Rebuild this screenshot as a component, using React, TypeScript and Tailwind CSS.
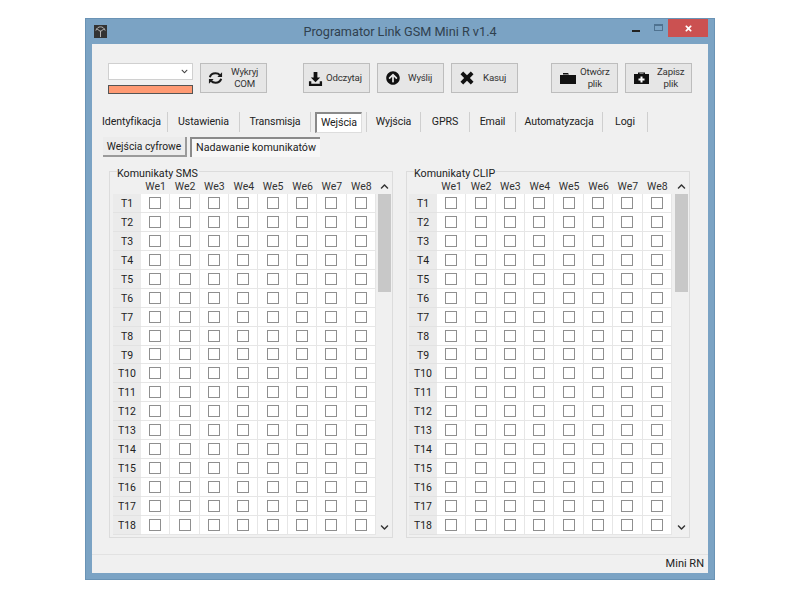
import React from "react";
import { FaArrowCircleUp, FaTimes, FaChevronDown, FaChevronUp } from "react-icons/fa";

const rows = Array.from({ length: 18 }, (_, i) => `T${i + 1}`);
const cols = ["We1", "We2", "We3", "We4", "We5", "We6", "We7", "We8"];

function Refresh() {
  return (
    <svg viewBox="0 0 16 14" className="w-[15px] h-[14px] shrink-0" fill="none">
      <path d="M2 6.2C2.6 3.6 5 2 8 2c2 0 3.6.7 4.6 2" stroke="#1a1a1a" strokeWidth="2.2" />
      <path d="M14 7.8C13.4 10.4 11 12 8 12c-2 0-3.6-.7-4.6-2" stroke="#1a1a1a" strokeWidth="2.2" />
      <path d="M15 .8V6h-5zM1 13.2V8h5z" fill="#1a1a1a" />
    </svg>
  );
}

function Download() {
  return (
    <svg viewBox="0 0 16 16" className="w-[15px] h-[15px] shrink-0" fill="#111">
      <path d="M6 1h4v6h3L8 12 3 7h3z" />
      <path d="M1 11h2.5v2.5h9V11H15v5H1z" />
    </svg>
  );
}

function BigX() {
  return (
    <svg viewBox="0 0 14 14" className="w-[14px] h-[14px] shrink-0" fill="#111">
      <path d="M3.2.6 7 4.2 10.8.6l2.7 2.7L9.9 7l3.6 3.7-2.7 2.7L7 9.8l-3.8 3.6L.5 10.7 4.1 7 .5 3.3z" />
    </svg>
  );
}

function Folder() {
  return (
    <svg viewBox="0 0 16 11" className="w-[16px] h-[11px] shrink-0" fill="#111">
      <path d="M3 0h5l1 1.5H3z" />
      <rect x="0" y="2" width="16" height="9" />
    </svg>
  );
}

function Case() {
  return (
    <svg viewBox="0 0 15 12" className="w-[15px] h-[12px] shrink-0">
      <path d="M4 2V.5h7V2h4v10H0V2zM5.5 2h4V1.5h-4z" fill="#111" />
      <path d="M6.5 4.5h2v2h2v2h-2v2h-2v-2h-2v-2h2z" fill="#fff" />
    </svg>
  );
}

function ToolButton({ icon, text, className }: { icon: React.ReactNode; text: React.ReactNode; className: string }) {
  return (
    <div className={`h-[30px] w-[67px] shrink-0 flex items-center bg-[#e6e6e6] border border-[#bdbdbd] ${className}`}>
      {icon}
      <span className="text-[9.7px] leading-[12px] text-center text-[#333] tracking-[-0.2px] whitespace-nowrap">{text}</span>
    </div>
  );
}

function Tab({ label, active, w }: { label: string; active?: boolean; w: string }) {
  return (
    <div className={`${w} h-[20px] shrink-0 flex items-center justify-center border-r border-[#cfcfcf] text-[10.6px] tracking-[-0.1px] text-[#222] whitespace-nowrap`}>
      <span className={active ? "border-l-2 border-t-2 border-[#8a8a8a] border-r border-r-[#ddd] border-b border-b-[#ddd] bg-white w-[47px] h-[21px] flex items-center justify-center" : ""}>{label}</span>
    </div>
  );
}

function Group({ title, padding, scrollWidth }: { title: string; padding: string; scrollWidth: string }) {
  return (
    <div className={`w-[284px] h-[367px] shrink-0 border border-[#dcdcdc] relative ${padding}`}>
      <span className="absolute left-[7px] -top-[5px] bg-[#f0f0f0] pr-[1px] text-[10.7px] leading-[14px] text-[#222] whitespace-nowrap">{title}</span>
      <div className="flex pt-[7px]">
        <div className="w-[263px] bg-[#f0f0f0]">
          <div className="flex h-[15px] items-center">
            <div className="w-[28px]" />
            {cols.map((c) => (
              <div key={c} className="w-[29.4px] text-center text-[10.5px] leading-[15px] text-[#333]">{c}</div>
            ))}
          </div>
          {rows.map((r) => (
            <div key={r} className="flex h-[18.95px]">
              <div className="w-[28px] bg-[#ebebeb] border-b border-[#e2e2e2] text-center text-[10.5px] leading-[19px] text-[#222]">{r}</div>
              {cols.map((c) => (
                <div key={c} className="w-[29.4px] bg-white border-r border-b border-[#e6e6e6] flex items-center justify-center">
                  <span className="w-[12px] h-[12px] border border-[#8f8f8f] bg-white" />
                </div>
              ))}
            </div>
          ))}
        </div>
        <div className={`${scrollWidth} h-[356px] flex flex-col items-end`}>
          <div className="h-[15px] w-[13px] flex items-center justify-center"><FaChevronUp className="w-[9px] h-[9px] text-[#333]" /></div>
          <div className="w-[13px] h-[98px] bg-[#c8c8c8]" />
          <div className="flex-1" />
          <div className="h-[15px] w-[13px] flex items-center justify-center"><FaChevronDown className="w-[9px] h-[9px] text-[#333]" /></div>
        </div>
      </div>
    </div>
  );
}

export default function App() {
  return (
    <div className="w-[800px] h-[600px] bg-white pt-[18px] pl-[85px] font-[family-name:Roboto,sans-serif]">
      <div className="w-[630px] h-[562px] bg-[#7ba3c4] border border-[#6a93b5] flex flex-col">
        <div className="h-[25px] shrink-0 flex items-center relative pl-[8px]">
          <svg viewBox="0 0 14 14" className="w-[13px] h-[13px] shrink-0">
            <rect width="14" height="14" fill="#333" />
            <path d="M7 13V6M7 7 3 4M7 7l4-3M2 6c1-3 3-4 5-4s4 1 5 4" stroke="#bbb" strokeWidth="1" fill="none" />
          </svg>
          <div className="flex-1 text-center text-[12.7px] text-[#30414f] pr-[21px] whitespace-nowrap">Programator Link GSM Mini R v1.4</div>
          <div className="absolute right-[6px] top-0 flex items-start">
            <div className="w-[8px] h-[2px] bg-[#222] mt-[11px] mr-[14px]" />
            <div className="w-[9px] h-[7px] border border-[#4f7290] border-t-2 mt-[5px] mr-[5px]" />
            <div className="w-[40px] h-[18px] bg-[#cb5151] flex items-center justify-center"><FaTimes className="w-[9px] h-[9px] text-white" /></div>
          </div>
        </div>
        <div className="mx-[6px] h-[529px] bg-[#f0f0f0] flex flex-col">
          <div className="flex pt-[19px] pl-[16px] h-[61px] shrink-0">
            <div className="w-[85px] shrink-0">
              <div className="h-[17px] bg-white border border-[#d0d0d0] flex items-center justify-end pr-[4px]"><FaChevronDown className="w-[7px] h-[7px] text-[#444]" /></div>
              <div className="h-[9px] mt-[5px] bg-[#ff9a73] border border-[#555]" />
            </div>
            <ToolButton className="ml-[7px] pl-[7px] gap-[8px]" icon={<Refresh />} text={<>Wykryj<br />COM</>} />
            <ToolButton className="ml-[36px] pl-[4px] gap-[3px]" icon={<Download />} text="Odczytaj" />
            <ToolButton className="ml-[7px] pl-[8px] gap-[8px]" icon={<FaArrowCircleUp className="w-[14px] h-[14px] text-[#111] shrink-0" />} text="Wyślij" />
            <ToolButton className="ml-[7px] pl-[8px] gap-[9px]" icon={<BigX />} text="Kasuj" />
            <ToolButton className="ml-[33px] pl-[8px] gap-[4px]" icon={<Folder />} text={<>Otwórz<br />plik</>} />
            <ToolButton className="ml-[7px] pl-[8px] gap-[8px]" icon={<Case />} text={<>Zapisz<br />plik</>} />
          </div>
          <div className="flex pl-[4px] h-[32px] shrink-0 pt-[7px]">
            <Tab w="w-[72px]" label="Identyfikacja" />
            <Tab w="w-[72px]" label="Ustawienia" />
            <Tab w="w-[71px]" label="Transmisja" />
            <Tab w="w-[56px]" label="Wejścia" active />
            <Tab w="w-[54px]" label="Wyjścia" />
            <Tab w="w-[49px]" label="GPRS" />
            <Tab w="w-[46px]" label="Email" />
            <Tab w="w-[87px]" label="Automatyzacja" />
            <Tab w="w-[45px]" label="Logi" />
          </div>
          <div className="flex pl-[11px] h-[34px] shrink-0 gap-[3px]">
            <div className="w-[84px] h-[20px] pt-[1px] bg-[#ececec] border-r-2 border-b-2 border-[#9a9a9a] flex items-center justify-center text-[10.3px] text-[#222] whitespace-nowrap">Wejścia cyfrowe</div>
            <div className="w-[130px] h-[20px] pt-[1px] bg-[#f7f7f7] border-l-2 border-t-2 border-[#8a8a8a] flex items-center justify-center text-[10.7px] text-[#222] whitespace-nowrap">Nadawanie komunikatów</div>
          </div>
          <div className="flex pl-[17px] gap-[13px]">
            <Group title="Komunikaty SMS" padding="pl-[3px]" scrollWidth="w-[15px]" />
            <Group title="Komunikaty CLIP" padding="pl-[2px]" scrollWidth="w-[16px]" />
          </div>
          <div className="flex-1" />
          <div className="h-[19px] shrink-0 border-t border-[#e2e2e2] flex items-center justify-end pr-[4px] text-[11px] text-[#222] whitespace-nowrap">Mini RN</div>
        </div>
      </div>
    </div>
  );
}
